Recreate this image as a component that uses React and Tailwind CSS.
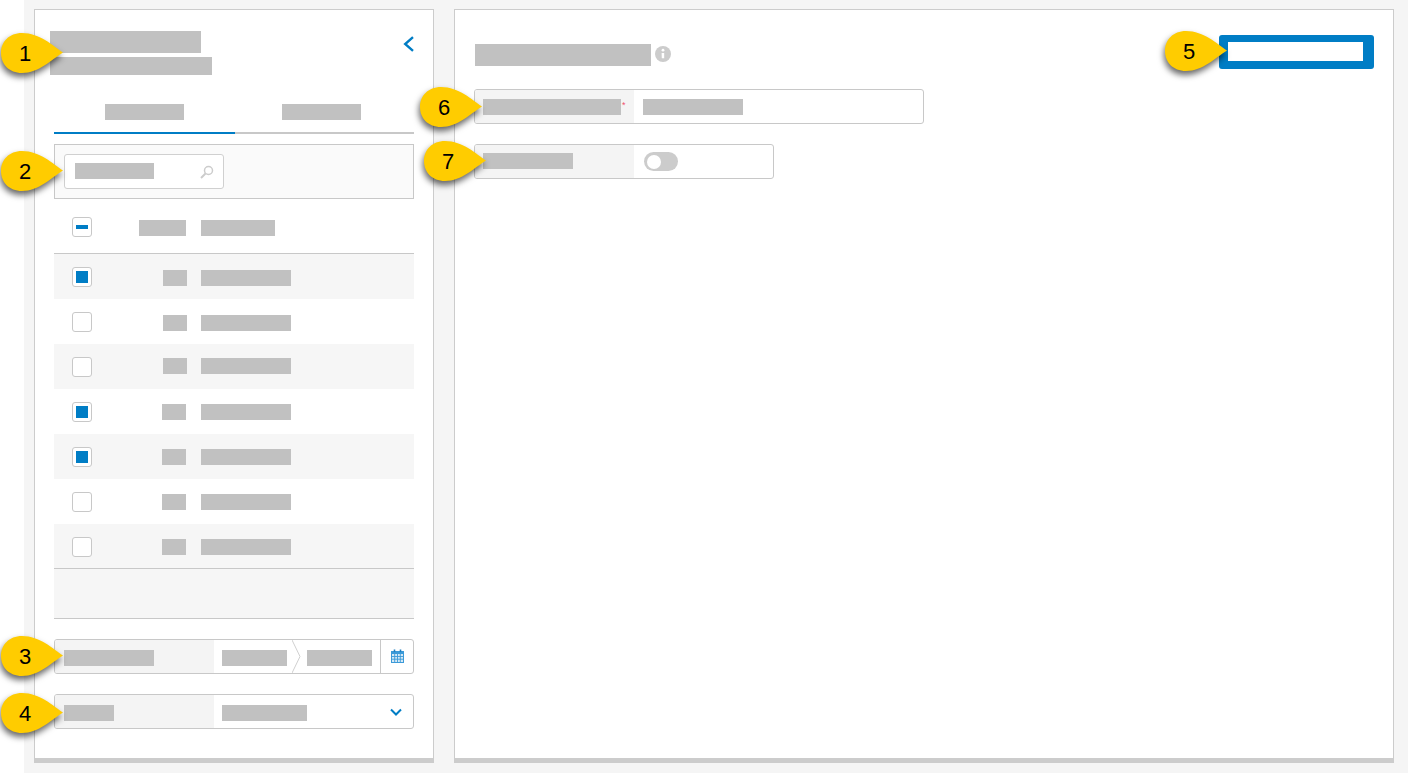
const rows = [
  { checked: true, gray: true, numPr: "pr-[14px]", shift: "mt-[2px]" },
  { checked: false, gray: false, numPr: "pr-[14px]", shift: "mt-[2px]" },
  { checked: false, gray: true, numPr: "pr-[14px]", shift: "mb-[2px]" },
  { checked: true, gray: false, numPr: "pr-[15px]", shift: "" },
  { checked: true, gray: true, numPr: "pr-[15px]", shift: "" },
  { checked: false, gray: false, numPr: "pr-[15px]", shift: "" },
  { checked: false, gray: true, numPr: "pr-[15px]", shift: "" },
];

function Block({ className = "" }) {
  return <div className={`bg-[#c1c1c1] shrink-0 ${className}`} />;
}

function Callout({ n, className }) {
  return (
    <div className={`absolute w-[62px] h-[40px] ${className}`}>
      <svg width="62" height="40" viewBox="0 0 62 40" className="absolute inset-0 overflow-visible drop-shadow-[-1px_4px_3px_rgba(0,0,0,0.6)]">
        <path d="M62 19.5C52 13 39 0 21 0C8 0 0 9 0 20C0 31 8 40 21 40C38 40 50 27 62 19.5Z" fill="#ffcc00" />
      </svg>
      <span className="absolute left-0 top-0 w-[48px] h-[40px] flex items-center justify-center text-[22px] text-black">{n}</span>
    </div>
  );
}

function Checkbox({ state }) {
  return (
    <div className="w-[20px] h-[20px] shrink-0 border border-[#c8c8c8] rounded-[3px] bg-white flex items-center justify-center">
      {state === "checked" && <div className="w-[12px] h-[12px] bg-[#007dc5]" />}
      {state === "mixed" && <div className="w-[12px] h-[4px] bg-[#007dc5]" />}
    </div>
  );
}

function SearchIcon() {
  return (
    <svg width="14" height="14" viewBox="0 0 14 14" fill="none" stroke="#cccccc">
      <circle cx="8.5" cy="5.5" r="4" strokeWidth="1.5" />
      <path d="M5.5 8.5L1 13" strokeWidth="2" />
    </svg>
  );
}

function CalendarIcon() {
  return (
    <svg width="13" height="14" viewBox="0 0 13 14" className="mb-[2px]">
      <path d="M0 2h13v12H0z" fill="#3c9ad8" />
      <path d="M1 5h11v8H1z" fill="#d5e9f6" />
      <path d="M1 7.5h11M1 10.2h11M3.7 5v8M6.5 5v8M9.3 5v8" stroke="#3c9ad8" strokeWidth="0.9" />
      <path d="M3.5 0.5v2.5M9.5 0.5v2.5" stroke="#1f7fc0" strokeWidth="1.6" />
    </svg>
  );
}

function Field({ className = "", label, children }) {
  return (
    <div className={`flex h-[35px] border border-[#c8c8c8] rounded-[3px] bg-white overflow-hidden ${className}`}>
      <div className="w-[159px] shrink-0 bg-[#f4f4f4] flex items-center">{label}</div>
      {children}
    </div>
  );
}

function ListPanel() {
  return (
    <div className="w-[400px] h-[754px] shrink-0 bg-white border border-[#cccccc] border-b-[5px]">
      <div className="flex justify-between pl-[15px] pr-[19px] pt-[21px]">
        <div>
          <Block className="w-[151px] h-[22px]" />
          <Block className="w-[162px] h-[18px] mt-[4px]" />
        </div>
        <svg width="12" height="16" viewBox="0 0 12 16" fill="none" stroke="#007dc5" strokeWidth="2.4" className="mt-[5px]">
          <path d="M11 1.2L3.2 8l7.8 6.8" />
        </svg>
      </div>

      <div className="mx-[19px] mt-[17px] flex">
        <div className="w-[181px] h-[42px] border-b-2 border-[#007dc5] flex items-center justify-center">
          <Block className="w-[79px] h-[16px]" />
        </div>
        <div className="flex-1 h-[42px] border-b-2 border-[#c8c8c8] flex items-center justify-center pr-[6px]">
          <Block className="w-[79px] h-[16px]" />
        </div>
      </div>

      <div className="mx-[19px] mt-[10px]">
        <div className="h-[55px] border border-[#c8c8c8] bg-[#fafafa] pl-[9px] pt-[9px]">
          <div className="w-[160px] h-[35px] border border-[#d0d0d0] rounded-[3px] bg-white flex items-center justify-between pl-[10px] pr-[9px]">
            <Block className="w-[79px] h-[16px] mb-[1px]" />
            <SearchIcon />
          </div>
        </div>

        <div className="h-[55px] border-b border-[#c8c8c8] flex items-center pl-[18px] pt-[2px]">
          <Checkbox state="mixed" />
          <div className="w-[109px] flex justify-end pr-[15px]">
            <Block className="w-[47px] h-[16px] mt-[2px]" />
          </div>
          <Block className="w-[74px] h-[16px] mt-[2px]" />
        </div>

        <div>
          {rows.map((row, i) => (
            <div key={i} className={`h-[45px] flex items-center pl-[18px] pt-[1px] ${row.gray ? "bg-[#f6f6f6]" : "bg-white"}`}>
              <Checkbox state={row.checked ? "checked" : "empty"} />
              <div className={`w-[109px] flex justify-end ${row.numPr}`}>
                <Block className={`w-[24px] h-[16px] ${row.shift}`} />
              </div>
              <Block className={`w-[90px] h-[16px] ${row.shift}`} />
            </div>
          ))}
        </div>
        <div className="relative h-[51px] -mt-[1px] bg-[#f6f6f6] border-y border-[#c8c8c8]" />

        <Field className="mt-[20px]" label={<Block className="w-[90px] h-[16px] ml-[9px] mt-[2px]" />}>
          <div className="flex-1 flex items-center pl-[8px]">
            <Block className="w-[65px] h-[16px] mt-[2px]" />
            <svg width="10" height="33" viewBox="0 0 10 33" fill="none" stroke="#d0d0d0" className="ml-[5px] shrink-0">
              <path d="M0 0l8 16.5L0 33" />
            </svg>
            <Block className="w-[65px] h-[16px] ml-[5px] mt-[2px]" />
          </div>
          <div className="w-[33px] shrink-0 border-l border-[#c8c8c8] flex items-center justify-center">
            <CalendarIcon />
          </div>
        </Field>

        <Field className="mt-[20px]" label={<Block className="w-[50px] h-[16px] ml-[9px] mt-[2px]" />}>
          <div className="flex-1 flex items-center justify-between pl-[8px] pr-[11px]">
            <Block className="w-[85px] h-[16px] mt-[2px]" />
            <svg width="12" height="8" viewBox="0 0 12 8" fill="none" stroke="#007dc5" strokeWidth="2">
              <path d="M1 1.5l5 5 5-5" />
            </svg>
          </div>
        </Field>
      </div>
    </div>
  );
}

function DetailPanel() {
  return (
    <div className="w-[940px] h-[754px] shrink-0 bg-white border border-[#cccccc] border-b-[5px] pl-[19px] pr-[19px] pt-[25px]">
      <div className="flex justify-between items-start pl-[1px]">
        <div className="flex items-center mt-[9px]">
          <Block className="w-[176px] h-[22px]" />
          <svg width="16" height="16" viewBox="0 0 16 16" className="ml-[4px] mb-[2px]">
            <circle cx="8" cy="8" r="8" fill="#cccccc" />
            <circle cx="8" cy="4.2" r="1.4" fill="#ffffff" />
            <path d="M6.6 7h2.6v5.2h-2.4z" fill="#ffffff" />
          </svg>
        </div>
        <div className="w-[155px] h-[34px] bg-[#007dc5] rounded-[3px] pl-[9px] pt-[7px]">
          <div className="w-[135px] h-[19px] bg-white" />
        </div>
      </div>

      <Field
        className="w-[450px] mt-[20px]"
        label={
          <div className="flex items-start ml-[8px]">
            <Block className="w-[138px] h-[16px]" />
            <span className="text-[9px] leading-[10px] text-[#f0506e] ml-[1px] mt-[1px]">*</span>
          </div>
        }
      >
        <div className="flex-1 flex items-center pl-[9px]">
          <Block className="w-[100px] h-[16px]" />
        </div>
      </Field>

      <Field className="w-[300px] mt-[20px]" label={<Block className="w-[90px] h-[16px] ml-[8px] mb-[1px]" />}>
        <div className="flex-1 flex items-center pl-[10px]">
          <div className="w-[34px] h-[19px] rounded-full bg-[#cccccc] flex items-center pl-[3px]">
            <div className="w-[14px] h-[14px] rounded-full bg-white" />
          </div>
        </div>
      </Field>
    </div>
  );
}

export default function App() {
  return (
    <div className="relative w-[1408px] h-[773px] overflow-hidden bg-white pl-[24px] font-['Liberation_Sans',Arial,sans-serif]">
      <div className="h-full bg-[#f5f5f5] flex gap-[20px] pl-[10px] pt-[9px]">
        <ListPanel />
        <DetailPanel />
      </div>
      <Callout n="1" className="left-[1px] top-[33px]" />
      <Callout n="2" className="left-[1px] top-[151px]" />
      <Callout n="3" className="left-[1px] top-[636px]" />
      <Callout n="4" className="left-[1px] top-[693px]" />
      <Callout n="5" className="left-[1165px] top-[31px]" />
      <Callout n="6" className="left-[420px] top-[87px]" />
      <Callout n="7" className="left-[424px] top-[141px]" />
    </div>
  );
}
